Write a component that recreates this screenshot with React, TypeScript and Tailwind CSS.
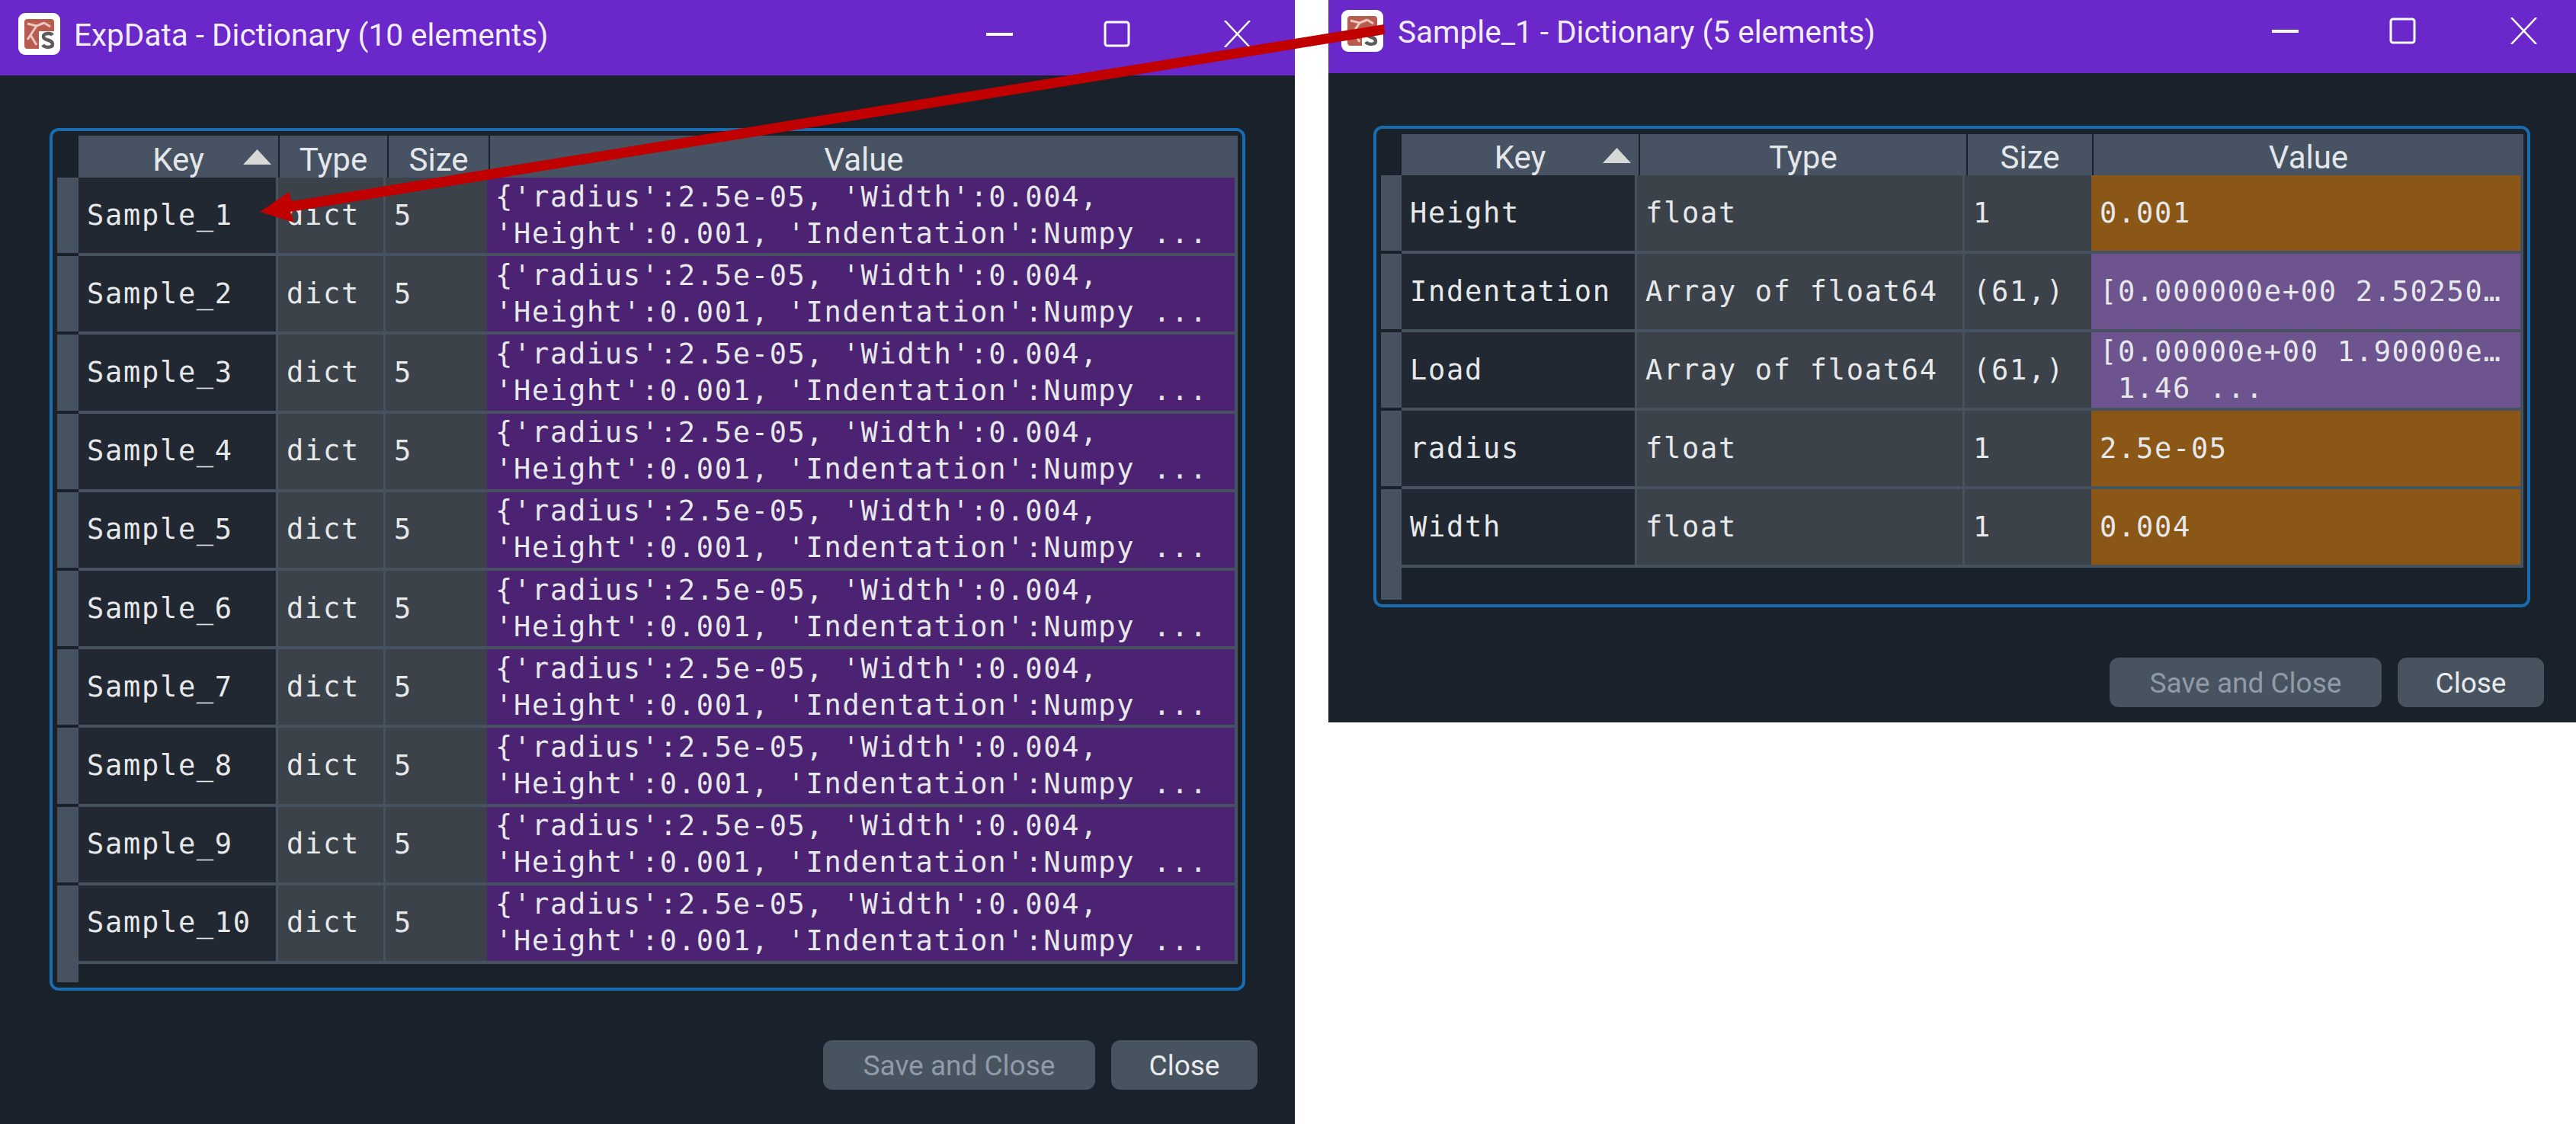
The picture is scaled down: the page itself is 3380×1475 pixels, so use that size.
const sans = "font-['Roboto',sans-serif]";
const mono = "font-['DejaVu_Sans_Mono',monospace] text-[37px] leading-[48px] tracking-[1.7px] whitespace-pre text-[#e6e8ea]";

const dictValue = "{'radius':2.5e-05, 'Width':0.004,\n'Height':0.001, 'Indentation':Numpy ...";

const expRows = Array.from({ length: 10 }, (_, i) => ({
  key: `Sample_${i + 1}`,
  type: 'dict',
  size: '5',
  value: dictValue,
  valueBg: 'bg-[#4c2372]',
}));

const sampleRows = [
  { key: 'Height', type: 'float', size: '1', value: '0.001', valueBg: 'bg-[#8a5716]' },
  { key: 'Indentation', type: 'Array of float64', size: '(61,)', value: '[0.000000e+00 2.50250…', valueBg: 'bg-[#6d548f]' },
  { key: 'Load', type: 'Array of float64', size: '(61,)', value: '[0.00000e+00 1.90000e…\n 1.46 ...', valueBg: 'bg-[#6d548f]' },
  { key: 'radius', type: 'float', size: '1', value: '2.5e-05', valueBg: 'bg-[#8a5716]' },
  { key: 'Width', type: 'float', size: '1', value: '0.004', valueBg: 'bg-[#8a5716]' },
];

function AppIcon({ className }: { className: string }) {
  return (
    <svg className={className} viewBox="0 0 55 55">
      <rect width="55" height="55" rx="9" fill="#fff" />
      <rect x="8" y="8" width="39" height="39" rx="4" fill="#b85c50" />
      <path d="M12 14l12 3 10-4M24 17l-8 12 8 13M16 29l-4 6M34 13l8 5" stroke="#ecc9c4" strokeWidth="3" fill="none" />
      <rect x="27" y="24" width="22" height="25" fill="#fff" />
      <path d="M45 29c-2-3-12-3-12 2 0 6 12 3 12 10 0 5-10 5-13 1" stroke="#5c5c5c" strokeWidth="4.5" fill="none" />
    </svg>
  );
}

function TitleBar({ title, bar, closeGap }: { title: string; bar: string; closeGap: string }) {
  return (
    <div className={`flex items-center shrink-0 bg-[#6a27c9] ${bar}`}>
      <AppIcon className="w-[55px] h-[55px] shrink-0" />
      <span className={`${sans} mt-[4px] text-[40.5px] text-[#f2edfb]`}>{title}</span>
      <div className="ml-auto flex items-center gap-[119px]">
        <svg className="w-[35px] h-[35px]" viewBox="0 0 35 35">
          <path d="M0 18h35" stroke="#fff" strokeWidth="4" />
        </svg>
        <svg className="w-[35px] h-[35px]" viewBox="0 0 35 35">
          <rect x="2" y="2" width="31" height="31" rx="3" stroke="#fff" strokeWidth="3" fill="none" />
        </svg>
        <svg className={`w-[35px] h-[35px] ${closeGap}`} viewBox="0 0 35 35">
          <path d="M1 0l33 35M34 0L1 35" stroke="#fff" strokeWidth="2.5" />
        </svg>
      </div>
    </div>
  );
}

type Row = { key: string; type: string; size: string; value: string; valueBg: string };
type Cols = {
  frame: string;
  headHeight: string;
  corner: string;
  rowStub: string;
  tailHeight: string;
  headCols: string[];
  cellCols: string[];
  rowHeight: string;
  arrowLeft: string;
};

function DictTable({ rows, cols }: { rows: Row[]; cols: Cols }) {
  const headers = ['Key', 'Type', 'Size', 'Value'];
  return (
    <div className={`flex flex-col border-[4px] border-[#1a6cb0] rounded-[12px] ${cols.frame}`}>
      {/* header row */}
      <div className={`flex shrink-0 ${cols.headHeight}`}>
        <div className={`${cols.corner} shrink-0`} />
        {headers.map((label, i) => (
          <div
            key={label}
            className={`relative flex items-end justify-center bg-[#475362] border-[#1a222b] ${sans} text-[42px] leading-[46px] text-[#e4e7ea] ${cols.headCols[i]}`}
          >
            {label}
            {i === 0 && (
              <svg className={`absolute top-[18px] w-[37px] h-[20px] ${cols.arrowLeft}`} viewBox="0 0 37 20">
                <path d="M18.5 0L37 20H0z" fill="#d8d8d8" />
              </svg>
            )}
          </div>
        ))}
      </div>
      {/* data rows */}
      {rows.map((row, r) => (
        <div key={row.key} className={`flex shrink-0 ${cols.rowHeight}`}>
          <div className={`${r === rows.length - 1 ? '' : 'mb-[4px]'} bg-[#46525f] ${cols.rowStub}`} />
          <div className={`flex items-center px-[11px] bg-[#212832] border-b-[4px] border-r-[3px] border-[#46525f] ${mono} ${cols.cellCols[0]}`}>{row.key}</div>
          <div className={`flex items-center px-[11px] bg-[#3b4249] border-b-[4px] border-r-[3px] border-[#46525f] ${mono} ${cols.cellCols[1]}`}>{row.type}</div>
          <div className={`flex items-center px-[11px] bg-[#3b4249] border-b-[4px] border-[#46525f] ${mono} ${cols.cellCols[2]}`}>{row.size}</div>
          <div className={`flex items-center px-[11px] border-b-[4px] border-r-[4px] border-[#46525f] ${row.valueBg} ${mono} ${cols.cellCols[3]}`}>{row.value}</div>
        </div>
      ))}
      <div className={`${cols.tailHeight} bg-[#46525f] ${cols.rowStub}`} />
    </div>
  );
}

function Footer({ className }: { className: string }) {
  return (
    <div className={`flex justify-end gap-[21px] ${className}`}>
      <button className={`w-[357px] h-[65px] pt-[2px] rounded-[12px] bg-[#47535f] text-[#8f9ba8] text-[37px] ${sans}`}>Save and Close</button>
      <button className={`w-[192px] h-[65px] pt-[2px] rounded-[12px] bg-[#47535f] text-[#e8eaed] text-[37px] ${sans}`}>Close</button>
    </div>
  );
}

const expCols: Cols = {
  frame: 'w-[1569px] h-[1132px] ml-[65px] mt-[69px] pt-[6px]',
  headHeight: 'h-[55px]',
  corner: 'w-[34px]',
  rowStub: 'ml-[6px] w-[28px]',
  tailHeight: 'h-[24px]',
  rowHeight: 'h-[103.2px]',
  arrowLeft: 'left-[216px]',
  headCols: ['w-[264px] border-r-2', 'w-[143px] border-r-2', 'w-[133px] border-r-2', 'w-[981px]'],
  cellCols: ['w-[262px]', 'w-[141px]', 'w-[133px]', 'w-[985px]'],
};

const sampleCols: Cols = {
  frame: 'w-[1518px] h-[632px] ml-[59px] mt-[69px] pt-[7px]',
  headHeight: 'h-[54px]',
  corner: 'w-[33px]',
  rowStub: 'ml-[6px] w-[27px]',
  tailHeight: 'h-[42px]',
  rowHeight: 'h-[103px]',
  arrowLeft: 'left-[264px]',
  headCols: ['w-[313px] border-r-2', 'w-[430px] border-r-2', 'w-[165px] border-r-2', 'w-[564px]'],
  cellCols: ['w-[309px]', 'w-[430px]', 'w-[166px]', 'w-[567px]'],
};

export default function App() {
  return (
    <div className="relative flex items-start w-[3380px] h-[1475px] bg-white overflow-hidden">
      <div className="flex flex-col w-[1699px] h-[1475px] shrink-0 bg-[#19222b]">
        <TitleBar title="ExpData - Dictionary (10 elements)" bar="h-[99px] pl-[24px] pr-[58px] pb-[10px] gap-[18px]" closeGap="ml-[4px]" />
        <DictTable rows={expRows} cols={expCols} />
        <Footer className="mt-[65px] pr-[49px]" />
      </div>
      <div className="flex flex-col w-[1637px] h-[948px] ml-[44px] shrink-0 bg-[#19222b]">
        <TitleBar title="Sample_1 - Dictionary (5 elements)" bar="h-[96px] pl-[17px] pr-[51px] pb-[15px] gap-[19px]" closeGap="ml-[5px]" />
        <DictTable rows={sampleRows} cols={sampleCols} />
        <Footer className="mt-[66px] pr-[42px]" />
      </div>
      {/* annotation arrow lying over both windows */}
      <svg className="absolute left-0 top-0 w-[3380px] h-[1475px] pointer-events-none" viewBox="0 0 3380 1475">
        <polygon points="1816,32 1817,45 381,278 386,292 341,278 379,252 383,264" fill="#c00000" />
      </svg>
    </div>
  );
}
